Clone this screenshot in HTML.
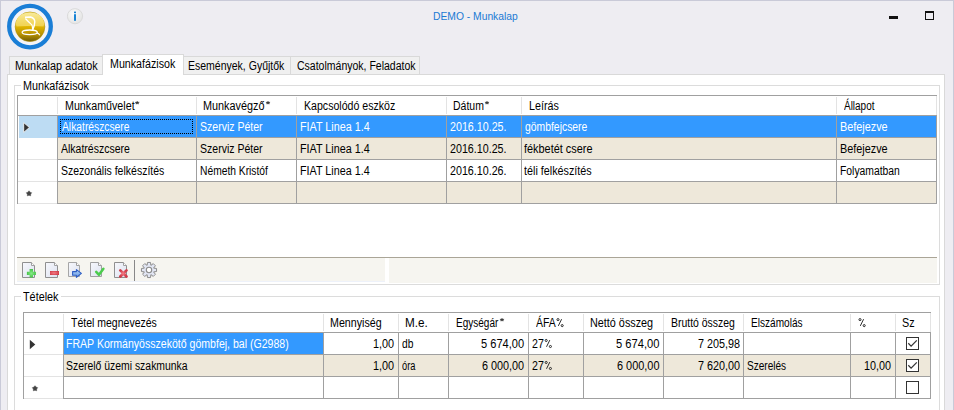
<!DOCTYPE html>
<html><head><meta charset="utf-8"><style>
html,body{margin:0;padding:0}
body{width:954px;height:410px;overflow:hidden;background:#eeedf2;position:relative;font-family:"Liberation Sans", sans-serif}
body>div,body>span,body>svg{position:absolute}
.t{font-size:12px;line-height:13px;white-space:nowrap;font-family:"Liberation Sans", sans-serif}
</style></head><body>
<div style="left:0px;top:0px;width:954px;height:1px;background:#c9cad8;"></div>
<div style="left:0px;top:0px;width:1px;height:410px;background:#c9cad8;"></div>
<div style="left:953px;top:0px;width:1px;height:410px;background:#c9cad8;"></div>
<div style="left:9px;top:56px;width:94px;height:19px;background:#f0f0f0;box-sizing:border-box;border:1px solid #d9d9d9;"></div>
<div style="left:183px;top:56px;width:108px;height:19px;background:#f0f0f0;box-sizing:border-box;border:1px solid #d9d9d9;"></div>
<div style="left:290px;top:56px;width:130px;height:19px;background:#f0f0f0;box-sizing:border-box;border:1px solid #d9d9d9;"></div>
<div style="left:7px;top:74px;width:938px;height:400px;background:#fff;box-sizing:border-box;border:1px solid #d9d9d9;"></div>
<div style="left:102px;top:54px;width:82px;height:21px;background:#fff;box-sizing:border-box;border:1px solid #d9d9d9;border-bottom:none;"></div>
<div style="left:103px;top:74px;width:80px;height:1px;background:#fff;"></div>
<span class="t" style="left:14.59px;top:60px;color:#000;transform:scaleX(0.9056);transform-origin:0 0">Munkalap adatok</span>
<span class="t" style="left:109.81px;top:58px;color:#000;transform:scaleX(0.8903);transform-origin:0 0">Munkafázisok</span>
<span class="t" style="left:187.52px;top:60px;color:#000;transform:scaleX(0.8752);transform-origin:0 0">Események, Gyűjtők</span>
<span class="t" style="left:296.80px;top:60px;color:#000;transform:scaleX(0.8756);transform-origin:0 0">Csatolmányok, Feladatok</span>
<span class="t" style="left:433.04px;top:10px;font-size:10.5px;color:#1a7ad4;transform:scaleX(0.9814);transform-origin:0 0">DEMO - Munkalap</span>
<div style="left:889px;top:16px;width:9px;height:3px;background:#111;"></div>
<div style="left:925px;top:11px;width:9px;height:9px;background:transparent;box-sizing:border-box;border:1px solid #111;border-top:2px solid #111;"></div>
<div style="left:14px;top:85px;width:7px;height:1px;background:#dcdcdc;"></div>
<div style="left:91px;top:85px;width:849px;height:1px;background:#dcdcdc;"></div>
<div style="left:14px;top:85px;width:1px;height:200px;background:#dcdcdc;"></div>
<div style="left:939px;top:85px;width:1px;height:200px;background:#dcdcdc;"></div>
<div style="left:14px;top:284px;width:926px;height:1px;background:#dcdcdc;"></div>
<span class="t" style="left:22.60px;top:80px;color:#000;transform:scaleX(0.8986);transform-origin:0 0">Munkafázisok</span>
<div style="left:14px;top:296px;width:7px;height:1px;background:#dcdcdc;"></div>
<div style="left:61px;top:296px;width:879px;height:1px;background:#dcdcdc;"></div>
<div style="left:14px;top:296px;width:1px;height:125px;background:#dcdcdc;"></div>
<div style="left:939px;top:296px;width:1px;height:125px;background:#dcdcdc;"></div>
<span class="t" style="left:23.00px;top:291px;color:#000;transform:scaleX(0.9026);transform-origin:0 0">Tételek</span>
<div style="left:17px;top:95px;width:1px;height:109px;background:#a0a0a0;"></div>
<div style="left:17px;top:95px;width:920px;height:1px;background:#a0a0a0;"></div>
<div style="left:18px;top:96px;width:918px;height:19px;background:#fff;"></div>
<div style="left:17px;top:115px;width:920px;height:1px;background:#a0a0a0;"></div>
<div style="left:57px;top:97px;width:1px;height:17px;background:#e3e3e3;"></div>
<div style="left:196px;top:97px;width:1px;height:17px;background:#e3e3e3;"></div>
<div style="left:296px;top:97px;width:1px;height:17px;background:#e3e3e3;"></div>
<div style="left:446px;top:97px;width:1px;height:17px;background:#e3e3e3;"></div>
<div style="left:521px;top:97px;width:1px;height:17px;background:#e3e3e3;"></div>
<div style="left:836px;top:97px;width:1px;height:17px;background:#e3e3e3;"></div>
<div style="left:936px;top:96px;width:1px;height:19px;background:#e3e3e3;"></div>
<div style="left:58px;top:116px;width:878px;height:21px;background:#3399ff;"></div>
<div style="left:57px;top:137px;width:880px;height:1px;background:#a0a0a0;"></div>
<div style="left:58px;top:138px;width:878px;height:21px;background:#eee8da;"></div>
<div style="left:57px;top:159px;width:880px;height:1px;background:#a0a0a0;"></div>
<div style="left:58px;top:160px;width:878px;height:21px;background:#fff;"></div>
<div style="left:57px;top:181px;width:880px;height:1px;background:#a0a0a0;"></div>
<div style="left:58px;top:182px;width:878px;height:21px;background:#eee8da;"></div>
<div style="left:57px;top:203px;width:880px;height:1px;background:#a0a0a0;"></div>
<div style="left:19px;top:116px;width:38px;height:22px;background:#bddcf3;"></div>
<div style="left:18px;top:138px;width:39px;height:21px;background:#fff;"></div>
<div style="left:18px;top:160px;width:39px;height:21px;background:#fff;"></div>
<div style="left:18px;top:182px;width:39px;height:21px;background:#fff;"></div>
<div style="left:18px;top:159px;width:39px;height:1px;background:#e3e3e3;"></div>
<div style="left:18px;top:181px;width:39px;height:1px;background:#e3e3e3;"></div>
<div style="left:18px;top:203px;width:39px;height:1px;background:#e3e3e3;"></div>
<div style="left:57px;top:116px;width:1px;height:88px;background:#a0a0a0;"></div>
<div style="left:196px;top:116px;width:1px;height:88px;background:#a0a0a0;"></div>
<div style="left:296px;top:116px;width:1px;height:88px;background:#a0a0a0;"></div>
<div style="left:446px;top:116px;width:1px;height:88px;background:#a0a0a0;"></div>
<div style="left:521px;top:116px;width:1px;height:88px;background:#a0a0a0;"></div>
<div style="left:836px;top:116px;width:1px;height:88px;background:#a0a0a0;"></div>
<div style="left:936px;top:116px;width:1px;height:88px;background:#a0a0a0;"></div>
<svg style="left:22px;top:121px" width="10" height="13"><path d="M1.7 1.6 L7.4 6.5 L1.7 11.4 Z" fill="#333" stroke="#fff" stroke-width="0.8" stroke-linejoin="round"/></svg>
<span class="t" style="left:64.61px;top:100px;color:#000;transform:scaleX(0.8922);transform-origin:0 0">Munkaművelet</span>
<span class="t" style="left:203.40px;top:100px;color:#000;transform:scaleX(0.9045);transform-origin:0 0">Munkavégző</span>
<span class="t" style="left:303.92px;top:100px;color:#000;transform:scaleX(0.8824);transform-origin:0 0">Kapcsolódó eszköz</span>
<span class="t" style="left:453.43px;top:100px;color:#000;transform:scaleX(0.8735);transform-origin:0 0">Dátum</span>
<span class="t" style="left:528.51px;top:100px;color:#000;transform:scaleX(0.8938);transform-origin:0 0">Leírás</span>
<span class="t" style="left:844.30px;top:100px;color:#000;transform:scaleX(0.8297);transform-origin:0 0">Állapot</span>
<span class="t" style="left:62.20px;top:121px;color:#fff;transform:scaleX(0.8577);transform-origin:0 0">Alkatrészcsere</span>
<span class="t" style="left:199.52px;top:121px;color:#fff;transform:scaleX(0.8771);transform-origin:0 0">Szerviz Péter</span>
<span class="t" style="left:450.40px;top:121px;color:#fff;transform:scaleX(0.8919);transform-origin:0 0">2016.10.25.</span>
<span class="t" style="left:839.60px;top:121px;color:#fff;transform:scaleX(0.9039);transform-origin:0 0">Befejezve</span>
<span class="t" style="left:299.50px;top:121px;color:#fff;transform:scaleX(0.8987);transform-origin:0 0">FIAT Linea 1.4</span>
<span class="t" style="left:60.90px;top:143px;color:#000;transform:scaleX(0.8744);transform-origin:0 0">Alkatrészcsere</span>
<span class="t" style="left:199.52px;top:143px;color:#000;transform:scaleX(0.8771);transform-origin:0 0">Szerviz Péter</span>
<span class="t" style="left:450.40px;top:143px;color:#000;transform:scaleX(0.8919);transform-origin:0 0">2016.10.25.</span>
<span class="t" style="left:839.60px;top:143px;color:#000;transform:scaleX(0.9039);transform-origin:0 0">Befejezve</span>
<span class="t" style="left:299.50px;top:143px;color:#000;transform:scaleX(0.8987);transform-origin:0 0">FIAT Linea 1.4</span>
<span class="t" style="left:61.12px;top:165px;color:#000;transform:scaleX(0.8752);transform-origin:0 0">Szezonális felkészítés</span>
<span class="t" style="left:199.54px;top:165px;color:#000;transform:scaleX(0.8557);transform-origin:0 0">Németh Kristóf</span>
<span class="t" style="left:450.40px;top:165px;color:#000;transform:scaleX(0.8919);transform-origin:0 0">2016.10.26.</span>
<span class="t" style="left:839.64px;top:165px;color:#000;transform:scaleX(0.8632);transform-origin:0 0">Folyamatban</span>
<span class="t" style="left:299.50px;top:165px;color:#000;transform:scaleX(0.8987);transform-origin:0 0">FIAT Linea 1.4</span>
<span class="t" style="left:524.60px;top:121px;color:#fff;transform:scaleX(0.8653);transform-origin:0 0">gömbfejcsere</span>
<span class="t" style="left:523.90px;top:143px;color:#000;transform:scaleX(0.9080);transform-origin:0 0">fékbetét csere</span>
<span class="t" style="left:523.90px;top:165px;color:#000;transform:scaleX(0.8987);transform-origin:0 0">téli felkészítés</span>
<div style="left:60px;top:119px;width:133px;height:15px;background:transparent;box-sizing:border-box;border:1px dotted #000;"></div>
<div style="left:17px;top:257px;width:920px;height:1px;background:#aaa597;"></div>
<div style="left:17px;top:258px;width:368px;height:24px;background:#f6f5f0;"></div>
<div style="left:17px;top:281px;width:368px;height:1px;background:#eef2fa;"></div>
<div style="left:389px;top:258px;width:548px;height:25px;background:#f6f5f0;"></div>
<div style="left:134px;top:260px;width:1px;height:21px;background:#888;"></div>
<svg style="left:0;top:0" width="954" height="410"><defs>
<linearGradient id="docg" x1="0" y1="0" x2="1" y2="1"><stop offset="0" stop-color="#f7f8fc"/><stop offset="1" stop-color="#dde2f0"/></linearGradient>
<radialGradient id="grn" cx="0.5" cy="0.5" r="0.6"><stop offset="0" stop-color="#86ea86"/><stop offset="1" stop-color="#3cbc3c"/></radialGradient>
<radialGradient id="redg" cx="0.45" cy="0.5" r="0.6"><stop offset="0" stop-color="#f47c84"/><stop offset="1" stop-color="#d03c48"/></radialGradient>
<linearGradient id="blug" x1="0" y1="0" x2="0" y2="1"><stop offset="0" stop-color="#a9cdf6"/><stop offset="1" stop-color="#6f9fe2"/></linearGradient>
</defs><path d="M22.5 262.5 H31.5 L34.5 265.5 V277.5 H22.5 Z" fill="url(#docg)" stroke="#8f8f8f"/><path d="M31.5 262.5 V265.5 H34.5" fill="#fff" stroke="#a0a0a0"/><path d="M29.6 269.1 h3.4 v2.7 h2.9 v3.2 h-2.9 v2.6 h-3.4 v-2.6 h-2.7 v-3.2 h2.7 z" fill="url(#grn)"/><path d="M45.5 262.5 H54.5 L57.5 265.5 V277.5 H45.5 Z" fill="url(#docg)" stroke="#8f8f8f"/><path d="M54.5 262.5 V265.5 H57.5" fill="#fff" stroke="#a0a0a0"/><rect x="50" y="271" width="9" height="4" fill="url(#redg)"/><path d="M68.5 262.5 H76.5 L79.5 265.5 V276.5 H68.5 Z" fill="url(#docg)" stroke="#a6a6a6"/><path d="M76.5 262.5 V265.5 H79.5" fill="#fff" stroke="#a0a0a0"/><path d="M72.6 271.6 H76.4 V269.6 L81.4 273.4 L76.4 277.3 V275.2 H72.6 Z" fill="url(#blug)" stroke="#2f5fc4" stroke-width="1.1" stroke-linejoin="round"/><path d="M90.5 262.5 H98.5 L101.5 265.5 V276.5 H90.5 Z" fill="url(#docg)" stroke="#a0a0a0"/><path d="M98.5 262.5 V265.5 H101.5" fill="#fff" stroke="#a0a0a0"/><path d="M96.2 271.8 L99 274.8 L103.4 268.8" fill="none" stroke="#4ccc4c" stroke-width="2.5" stroke-linecap="round" stroke-linejoin="round"/><path d="M114.5 262.5 H123.5 L126.5 265.5 V277.5 H114.5 Z" fill="url(#docg)" stroke="#8f8f8f"/><path d="M123.5 262.5 V265.5 H126.5" fill="#fff" stroke="#a0a0a0"/><path d="M120.3 270.4 L126.5 276.5 M126.5 270.4 L120.3 276.5" stroke="url(#redg)" stroke-width="2.7" stroke-linecap="round"/><path d="M156.55 268.47 L156.55 271.53 L153.63 271.88 L153.60 271.95 L155.42 274.25 L153.25 276.42 L150.95 274.60 L150.88 274.63 L150.53 277.55 L147.47 277.55 L147.12 274.63 L147.05 274.60 L144.75 276.42 L142.58 274.25 L144.40 271.95 L144.37 271.88 L141.45 271.53 L141.45 268.47 L144.37 268.12 L144.40 268.05 L142.58 265.75 L144.75 263.58 L147.05 265.40 L147.12 265.37 L147.47 262.45 L150.53 262.45 L150.88 265.37 L150.95 265.40 L153.25 263.58 L155.42 265.75 L153.60 268.05 L153.63 268.12 Z" fill="#e2e6f3" stroke="#8c8c8c" stroke-linejoin="round"/><circle cx="149" cy="270" r="2.7" fill="#fff" stroke="#8c8c8c" stroke-width="1.1"/></svg>
<div style="left:23px;top:312px;width:1px;height:87px;background:#a0a0a0;"></div>
<div style="left:23px;top:312px;width:908px;height:1px;background:#a0a0a0;"></div>
<div style="left:24px;top:313px;width:906px;height:19px;background:#fff;"></div>
<div style="left:23px;top:332px;width:908px;height:1px;background:#a0a0a0;"></div>
<div style="left:63px;top:314px;width:1px;height:17px;background:#e3e3e3;"></div>
<div style="left:323px;top:314px;width:1px;height:17px;background:#e3e3e3;"></div>
<div style="left:398px;top:314px;width:1px;height:17px;background:#e3e3e3;"></div>
<div style="left:448px;top:314px;width:1px;height:17px;background:#e3e3e3;"></div>
<div style="left:528px;top:314px;width:1px;height:17px;background:#e3e3e3;"></div>
<div style="left:583px;top:314px;width:1px;height:17px;background:#e3e3e3;"></div>
<div style="left:663px;top:314px;width:1px;height:17px;background:#e3e3e3;"></div>
<div style="left:743px;top:314px;width:1px;height:17px;background:#e3e3e3;"></div>
<div style="left:850px;top:314px;width:1px;height:17px;background:#e3e3e3;"></div>
<div style="left:895px;top:314px;width:1px;height:17px;background:#e3e3e3;"></div>
<div style="left:930px;top:313px;width:1px;height:19px;background:#e3e3e3;"></div>
<div style="left:64px;top:333px;width:866px;height:21px;background:#fff;"></div>
<div style="left:63px;top:354px;width:868px;height:1px;background:#a0a0a0;"></div>
<div style="left:64px;top:355px;width:866px;height:21px;background:#eee8da;"></div>
<div style="left:63px;top:376px;width:868px;height:1px;background:#a0a0a0;"></div>
<div style="left:64px;top:377px;width:866px;height:21px;background:#fff;"></div>
<div style="left:63px;top:398px;width:868px;height:1px;background:#a0a0a0;"></div>
<div style="left:64px;top:333px;width:259px;height:21px;background:#3399ff;"></div>
<div style="left:24px;top:333px;width:39px;height:65px;background:#fff;"></div>
<div style="left:24px;top:354px;width:39px;height:1px;background:#e3e3e3;"></div>
<div style="left:24px;top:376px;width:39px;height:1px;background:#e3e3e3;"></div>
<div style="left:24px;top:398px;width:39px;height:1px;background:#e3e3e3;"></div>
<div style="left:63px;top:333px;width:1px;height:66px;background:#a0a0a0;"></div>
<div style="left:323px;top:333px;width:1px;height:66px;background:#a0a0a0;"></div>
<div style="left:398px;top:333px;width:1px;height:66px;background:#a0a0a0;"></div>
<div style="left:448px;top:333px;width:1px;height:66px;background:#a0a0a0;"></div>
<div style="left:528px;top:333px;width:1px;height:66px;background:#a0a0a0;"></div>
<div style="left:583px;top:333px;width:1px;height:66px;background:#a0a0a0;"></div>
<div style="left:663px;top:333px;width:1px;height:66px;background:#a0a0a0;"></div>
<div style="left:743px;top:333px;width:1px;height:66px;background:#a0a0a0;"></div>
<div style="left:850px;top:333px;width:1px;height:66px;background:#a0a0a0;"></div>
<div style="left:895px;top:333px;width:1px;height:66px;background:#a0a0a0;"></div>
<div style="left:930px;top:333px;width:1px;height:66px;background:#a0a0a0;"></div>
<svg style="left:28px;top:338px" width="10" height="13"><path d="M1.8 1.8 L7.3 6.5 L1.8 11.2 Z" fill="#333"/></svg>
<span class="t" style="left:71.20px;top:317px;color:#000;transform:scaleX(0.8755);transform-origin:0 0">Tétel megnevezés</span>
<span class="t" style="left:330.31px;top:317px;color:#000;transform:scaleX(0.8893);transform-origin:0 0">Mennyiség</span>
<span class="t" style="left:405.12px;top:317px;color:#000;transform:scaleX(0.9762);transform-origin:0 0">M.e.</span>
<span class="t" style="left:455.67px;top:317px;color:#000;transform:scaleX(0.8340);transform-origin:0 0">Egységár</span>
<span class="t" style="left:535.70px;top:317px;color:#000;transform:scaleX(0.8739);transform-origin:0 0">ÁFA</span>
<span class="t" style="left:590.30px;top:317px;color:#000;transform:scaleX(0.9015);transform-origin:0 0">Nettó összeg</span>
<span class="t" style="left:670.73px;top:317px;color:#000;transform:scaleX(0.8708);transform-origin:0 0">Bruttó összeg</span>
<span class="t" style="left:751.16px;top:317px;color:#000;transform:scaleX(0.8400);transform-origin:0 0">Elszámolás</span>
<span class="t" style="left:902.10px;top:317px;color:#000;transform:scaleX(0.9000);transform-origin:0 0">Sz</span>
<span class="t" style="left:66.22px;top:338px;color:#fff;transform:scaleX(0.8794);transform-origin:0 0">FRAP Kormányösszekötő gömbfej, bal (G2988)</span>
<span class="t" style="left:66.23px;top:360px;color:#000;transform:scaleX(0.8683);transform-origin:0 0">Szerelő üzemi szakmunka</span>
<span class="t" style="left:372.50px;top:338px;color:#000;transform:scaleX(0.9045);transform-origin:0 0">1,00</span>
<span class="t" style="left:532.00px;top:338px;color:#000;transform:scaleX(0.8846);transform-origin:0 0">27</span>
<span class="t" style="left:372.50px;top:360px;color:#000;transform:scaleX(0.9045);transform-origin:0 0">1,00</span>
<span class="t" style="left:532.00px;top:360px;color:#000;transform:scaleX(0.8846);transform-origin:0 0">27</span>
<span class="t" style="left:401.70px;top:338px;color:#000;transform:scaleX(0.8538);transform-origin:0 0">db</span>
<span class="t" style="left:401.70px;top:360px;color:#000;transform:scaleX(0.7722);transform-origin:0 0">óra</span>
<span class="t" style="left:481.48px;top:338px;color:#000;transform:scaleX(0.9222);transform-origin:0 0">5 674,00</span>
<span class="t" style="left:616.07px;top:338px;color:#000;transform:scaleX(0.9289);transform-origin:0 0">5 674,00</span>
<span class="t" style="left:697.50px;top:338px;color:#000;transform:scaleX(0.9000);transform-origin:0 0">7 205,98</span>
<span class="t" style="left:482.40px;top:360px;color:#000;transform:scaleX(0.9022);transform-origin:0 0">6 000,00</span>
<span class="t" style="left:617.00px;top:360px;color:#000;transform:scaleX(0.9087);transform-origin:0 0">6 000,00</span>
<span class="t" style="left:697.50px;top:360px;color:#000;transform:scaleX(0.9000);transform-origin:0 0">7 620,00</span>
<span class="t" style="left:747.16px;top:360px;color:#000;transform:scaleX(0.8370);transform-origin:0 0">Szerelés</span>
<span class="t" style="left:864.10px;top:360px;color:#000;transform:scaleX(0.9000);transform-origin:0 0">10,00</span>
<div style="left:906px;top:337px;width:13px;height:13px;box-sizing:border-box;border:1px solid #333;background:#fff"></div>
<svg style="left:906px;top:337px" width="13" height="13"><path d="M2.3 6.3 L5.1 9.2 L10.8 3.4" fill="none" stroke="#333" stroke-width="1.25"/></svg>
<div style="left:906px;top:359px;width:13px;height:13px;box-sizing:border-box;border:1px solid #333;background:#fff"></div>
<svg style="left:906px;top:359px" width="13" height="13"><path d="M2.3 6.3 L5.1 9.2 L10.8 3.4" fill="none" stroke="#333" stroke-width="1.25"/></svg>
<div style="left:906px;top:381px;width:13px;height:13px;box-sizing:border-box;border:1px solid #333;background:#fff"></div>
<svg style="left:0;top:0" width="60" height="56">
<defs>
<linearGradient id="gold" x1="0" y1="0" x2="0" y2="1">
<stop offset="0" stop-color="#eccb30"/><stop offset="0.44" stop-color="#e9c21c"/><stop offset="0.5" stop-color="#dfb300"/><stop offset="0.75" stop-color="#b99200"/><stop offset="1" stop-color="#6e5a06"/>
</linearGradient>
<linearGradient id="hl" x1="0" y1="0" x2="0" y2="1">
<stop offset="0" stop-color="#f8ea9c"/><stop offset="0.6" stop-color="#f4dc6c"/><stop offset="1" stop-color="#f1d254"/>
</linearGradient>
</defs>
<circle cx="30" cy="26.6" r="18.9" fill="#f4f4f7"/>
<circle cx="30" cy="26.6" r="20.8" fill="none" stroke="#1a7ed6" stroke-width="4.3"/>
<circle cx="30" cy="26.8" r="14.8" fill="url(#gold)" stroke="#a88a00" stroke-width="0.6"/>
<path d="M15.6 25.6 Q15.8 12.6 30 12.4 Q44.2 12.6 44.4 25.6 Q30 24.6 15.6 25.6 Z" fill="url(#hl)"/>
<path d="M16.5 25.9 Q30 24.9 43.5 25.9" fill="none" stroke="#f7e27a" stroke-width="0.7"/>
<path d="M25.0 17.3 L30.6 17.0 Q34.7 18.2 34.8 21.8 Q34.6 25.6 33.1 28.8 L32.6 30.6" fill="none" stroke="#fff" stroke-width="1.4"/>
<path d="M25.4 18.5 Q28.4 21.8 31.9 24.9 Q32.7 27 32.6 30" fill="none" stroke="#fff" stroke-width="1.2"/>
<ellipse cx="29.7" cy="32.3" rx="7.6" ry="2.3" fill="none" stroke="#fff" stroke-width="1.3"/>
<path d="M36.8 32.9 Q38.9 33.6 39.9 35.2" fill="none" stroke="#fff" stroke-width="1.2"/>
</svg>
<svg style="left:66px;top:8px" width="18" height="18">
<defs><radialGradient id="ig" cx="0.4" cy="0.35" r="0.7"><stop offset="0" stop-color="#fbfbfb"/><stop offset="1" stop-color="#e2e2e2"/></radialGradient></defs>
<circle cx="9" cy="8.2" r="7.6" fill="url(#ig)" stroke="#d6d6d6" stroke-width="0.8"/>
<rect x="8" y="3.6" width="2" height="1.6" fill="#1a84d4"/>
<rect x="8" y="6.2" width="2" height="6.6" fill="#1a84d4"/>
</svg>
<svg style="left:0;top:0" width="60" height="410"><polygon points="29.00,190.80 30.03,192.18 31.66,192.73 30.66,194.14 30.65,195.87 29.00,195.35 27.35,195.87 27.34,194.14 26.34,192.73 27.97,192.18" fill="#444" stroke="#444" stroke-width="0.5" stroke-linejoin="round"/><polygon points="35.00,385.70 36.03,387.08 37.66,387.63 36.66,389.04 36.65,390.77 35.00,390.25 33.35,390.77 33.34,389.04 32.34,387.63 33.97,387.08" fill="#444" stroke="#444" stroke-width="0.5" stroke-linejoin="round"/></svg>
<svg style="left:0;top:0" width="954" height="410"><polygon points="137.20,101.22 137.85,102.16 139.29,102.31 138.25,103.04 138.49,104.08 137.20,103.59 135.91,104.08 136.15,103.04 135.11,102.31 136.55,102.16" fill="#2a2a2a" stroke="#2a2a2a" stroke-width="0.4" stroke-linejoin="round"/><polygon points="268.00,101.22 268.65,102.16 270.09,102.31 269.05,103.04 269.29,104.08 268.00,103.59 266.71,104.08 266.95,103.04 265.91,102.31 267.35,102.16" fill="#2a2a2a" stroke="#2a2a2a" stroke-width="0.4" stroke-linejoin="round"/><polygon points="487.00,101.22 487.65,102.16 489.09,102.31 488.05,103.04 488.29,104.08 487.00,103.59 485.71,104.08 485.95,103.04 484.91,102.31 486.35,102.16" fill="#2a2a2a" stroke="#2a2a2a" stroke-width="0.4" stroke-linejoin="round"/><polygon points="502.00,318.22 502.65,319.16 504.09,319.31 503.05,320.04 503.29,321.08 502.00,320.59 500.71,321.08 500.95,320.04 499.91,319.31 501.35,319.16" fill="#2a2a2a" stroke="#2a2a2a" stroke-width="0.4" stroke-linejoin="round"/><g fill="none" stroke="#222" stroke-width="0.95"><circle cx="558" cy="319.6" r="1.05"/><circle cx="562.2" cy="325.6" r="1.05"/><path d="M561.6 319.20000000000005 L558.3 325.90000000000003"/></g><g fill="none" stroke="#222" stroke-width="0.95"><circle cx="860" cy="319.6" r="1.05"/><circle cx="864.2" cy="325.6" r="1.05"/><path d="M863.6 319.20000000000005 L860.3 325.90000000000003"/></g><g fill="none" stroke="#222" stroke-width="0.95"><circle cx="546.2" cy="340.5" r="1.05"/><circle cx="550.4000000000001" cy="346.5" r="1.05"/><path d="M549.8000000000001 340.1 L546.5 346.8"/></g><g fill="none" stroke="#222" stroke-width="0.95"><circle cx="546.2" cy="362.5" r="1.05"/><circle cx="550.4000000000001" cy="368.5" r="1.05"/><path d="M549.8000000000001 362.1 L546.5 368.8"/></g></svg>
</body></html>
